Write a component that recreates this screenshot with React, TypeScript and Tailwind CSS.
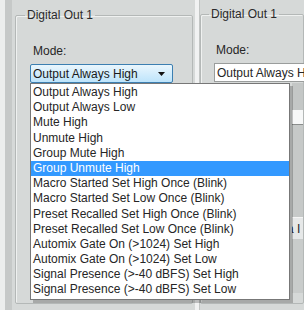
import React from 'react';

const options = [
  'Output Always High',
  'Output Always Low',
  'Mute High',
  'Unmute High',
  'Group Mute High',
  'Group Unmute High',
  'Macro Started Set High Once (Blink)',
  'Macro Started Set Low Once (Blink)',
  'Preset Recalled Set High Once (Blink)',
  'Preset Recalled Set Low Once (Blink)',
  'Automix Gate On (>1024) Set High',
  'Automix Gate On (>1024) Set Low',
  'Signal Presence (>-40 dBFS) Set High',
  'Signal Presence (>-40 dBFS) Set Low',
];

const selected = 5;

function GroupBox({ legendGap, children }: { legendGap: string; children: React.ReactNode }) {
  return (
    <fieldset className="h-full min-w-0 border border-[#b4b8b7] rounded-[2px] shadow-[inset_1px_1px_0_#eff1f0]">
      <legend className={legendGap + ' px-[2px] leading-[14px] text-[#2a2a2a]'}>Digital Out 1</legend>
      {children}
    </fieldset>
  );
}

export default function App() {
  return (
    <div className="relative w-[304px] h-[310px] overflow-hidden flex bg-[#d6d9d8] font-['Liberation_Sans',Arial,sans-serif] text-[12px] text-[#262626]">
      <div className="w-[5px] shrink-0 bg-[#eceeed]" />
      <div className="w-[7px] shrink-0 bg-[#c6c9c8]" />

      {/* left panel */}
      <div className="w-[183px] shrink-0 pl-[3px] pr-[2px] pt-[8px] pb-[6px]">
        <GroupBox legendGap="ml-[9px]">
          <div className="pl-[17px] pt-[22px] leading-[14px]">Mode:</div>
          <div className="ml-[14px] mt-[6px] w-[143px] h-[19px] flex items-center justify-between border border-[#3c7fb1] rounded-[2px] bg-gradient-to-b from-[#eaf6fd] to-[#bde4fb] pl-[2px] pr-[7px] text-[#1a1a1a]">
            <span>Output Always High</span>
            <svg width="7" height="4" viewBox="0 0 7 4">
              <path d="M0 0 H7 L3.5 4 Z" fill="#111" />
            </svg>
          </div>
        </GroupBox>
      </div>

      <div className="w-[5px] shrink-0 bg-[#f1f2f2] border-r border-[#c2c5c4]" />

      {/* right panel */}
      <div className="flex-1 min-w-0 pt-[7px] pb-[6px]">
        <GroupBox legendGap="ml-[8px]">
          <div className="pl-[15px] pt-[22px] leading-[14px]">Mode:</div>
          <div className="ml-[13px] mt-[6px] w-[120px] h-[19px] flex items-center border border-[#9a9d9c] bg-white pl-[2px] whitespace-nowrap overflow-hidden">
            Output Always High
          </div>
          <div className="ml-[91px] mt-px h-[27px] bg-[#c4c7c6]" />
          <div className="ml-[91px] h-[15px] bg-[#f7f8f8] border-b border-[#8a8d8c]" />
          <div className="ml-[91px] h-[92px] bg-[#c6c9c8]" />
          <div className="ml-[91px] h-[22px] bg-[#e6e8e8] border-t border-[#f5f5f5] leading-[22px] overflow-hidden whitespace-nowrap">
            <span className="-ml-[5px]">a I</span>
          </div>
          <div className="ml-[91px] h-[54px] bg-[#c9cccb]" />
        </GroupBox>
      </div>

      {/* open dropdown list */}
      <div className="absolute left-[30px] top-[83px] w-[260px] border border-[#777] bg-white shadow-[3px_3px_0_rgba(0,0,0,0.22)] pt-px pb-px">
        {options.map((o, i) => (
          <div
            key={o}
            className={
              i === selected
                ? 'h-[15.2px] leading-[15.2px] pl-[2px] bg-[#3399ff] text-white whitespace-nowrap'
                : 'h-[15.2px] leading-[15.2px] pl-[2px] whitespace-nowrap'
            }
          >
            {o}
          </div>
        ))}
      </div>
    </div>
  );
}
